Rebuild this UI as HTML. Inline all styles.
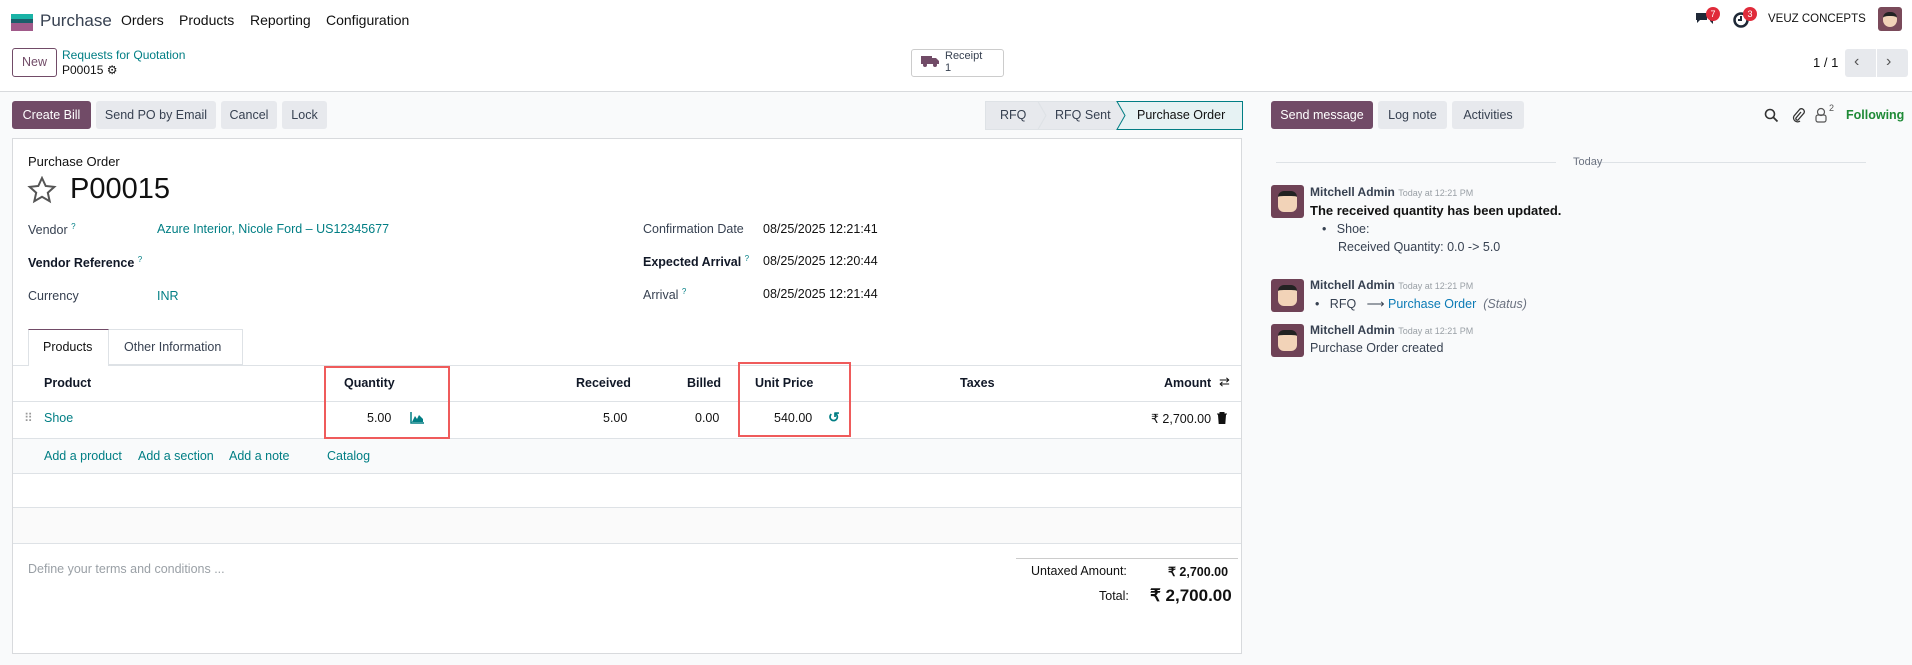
<!DOCTYPE html>
<html><head><meta charset="utf-8"><style>
*{box-sizing:border-box;margin:0;padding:0}
body{width:1912px;height:665px;overflow:hidden;background:#f9fafb;font-family:"Liberation Sans",sans-serif;font-size:12.5px;color:#374151;position:relative}
.a{position:absolute;white-space:nowrap}
.teal{color:#017e84}
.btn{position:absolute;height:28px;line-height:28px;text-align:center;border-radius:3px;background:#e7e9ed;color:#374151;font-size:12.5px}
.pri{background:#714b67;color:#fff}
.hdr{font-weight:bold;color:#111827}
.line{position:absolute;height:1px;background:#dee2e6}
</style></head><body>
<div class="a" style="left:0;top:0;width:1912px;height:92px;background:#fff;border-bottom:1px solid #d8dadd"></div>
<div class="a" style="left:11px;top:14px;width:22px;height:5px;background:#1ab3a6"></div>
<div class="a" style="left:11px;top:19px;width:22px;height:4px;background:#1c5f6b"></div>
<div class="a" style="left:11px;top:23px;width:22px;height:8px;background:#a15a8a"></div>
<div class="a" style="left:40px;top:11px;font-size:17px;color:#374151">Purchase</div>
<div class="a" style="left:121px;top:12px;font-size:14px;color:#111">Orders</div>
<div class="a" style="left:179px;top:12px;font-size:14px;color:#111">Products</div>
<div class="a" style="left:250px;top:12px;font-size:14px;color:#111">Reporting</div>
<div class="a" style="left:326px;top:12px;font-size:14px;color:#111">Configuration</div>
<svg class="a" style="left:1694px;top:10px" width="22" height="20" viewBox="0 0 22 20"><path d="M2 3h11v7H6l-3 3v-3H2z" fill="#1f2937"/><path d="M8 11h8l3 3v-3h1V6h-4v5" fill="#1f2937"/></svg>
<div class="a" style="left:1706px;top:7px;width:14px;height:14px;border-radius:7px;background:#e02b3a;color:#fff;font-size:9px;text-align:center;line-height:14px">7</div>
<svg class="a" style="left:1732px;top:11px" width="18" height="18"><circle cx="9" cy="9" r="6.5" fill="none" stroke="#1f2937" stroke-width="2.5"/><path d="M9 5v4h-3" stroke="#1f2937" stroke-width="2" fill="none"/></svg>
<div class="a" style="left:1743px;top:7px;width:14px;height:14px;border-radius:7px;background:#e02b3a;color:#fff;font-size:9px;text-align:center;line-height:14px">3</div>
<div class="a" style="left:1768px;top:13px;font-size:11.5px;color:#111">VEUZ CONCEPTS</div>
<div class="a" style="left:1878px;top:7px;width:24px;height:24px;border-radius:3px;background:#7a4a5a"><div style="margin:5px 5px;width:14px;height:15px;background:#f2d3b8;border-radius:6px 6px 7px 7px;border-top:4px solid #222"></div></div>
<div class="a" style="left:12px;top:48px;width:45px;height:29px;border:1px solid #714b67;border-radius:3px;color:#714b67;text-align:center;line-height:27px">New</div>
<div class="a teal" style="left:62px;top:48px;font-size:12px">Requests for Quotation</div>
<div class="a" style="left:62px;top:63px;font-size:12px;color:#111">P00015 <span style="font-size:12px">⚙</span></div>
<div class="a" style="left:911px;top:49px;width:93px;height:28px;border:1px solid #ccc;border-radius:3px;background:#fff"></div>
<svg class="a" style="left:921px;top:55px" width="18" height="13"><rect x="0" y="1" width="11" height="8" fill="#714b67"/><path d="M11 3h4l3 3v3h-7z" fill="#714b67"/><circle cx="4" cy="10" r="2" fill="#714b67"/><circle cx="14" cy="10" r="2" fill="#714b67"/></svg>
<div class="a" style="left:945px;top:50px;font-size:11px;line-height:12px;color:#374151">Receipt<br>1</div>
<div class="a" style="left:1813px;top:55px;font-size:13px;color:#111">1 / 1</div>
<div class="a" style="left:1845px;top:49px;width:63px;height:28px;background:#e7e9ed;border-radius:3px"></div>
<div class="a" style="left:1876px;top:49px;width:1px;height:28px;background:#fff"></div>
<div class="a" style="left:1854px;top:53px;font-size:16px;color:#555">‹</div>
<div class="a" style="left:1886px;top:53px;font-size:16px;color:#555">›</div>
<div class="btn pri" style="left:12px;top:101px;width:79px">Create Bill</div>
<div class="btn" style="left:96px;top:101px;width:120px">Send PO by Email</div>
<div class="btn" style="left:221px;top:101px;width:56px">Cancel</div>
<div class="btn" style="left:282px;top:101px;width:45px">Lock</div>
<svg class="a" style="left:985px;top:101px" width="258" height="29">
<path d="M0.5 0.5H53l8 14-8 14H0.5z" fill="#e7e9ed" stroke="#dee2e6"/>
<path d="M53 0.5h79l8 14-8 14H53l8-14z" fill="#e7e9ed" stroke="#dee2e6"/>
<path d="M132 0.5h125.5v28H132l8-14z" fill="#e6f2f3" stroke="#017e84"/>
</svg>
<div class="a" style="left:1000px;top:108px">RFQ</div>
<div class="a" style="left:1055px;top:108px">RFQ Sent</div>
<div class="a" style="left:1137px;top:108px;color:#111">Purchase Order</div>
<div class="a" style="left:12px;top:138px;width:1230px;height:516px;background:#fff;border:1px solid #d8dadd"></div>
<div class="a" style="left:28px;top:154px;font-size:13px;color:#111">Purchase Order</div>
<svg class="a" style="left:27px;top:176px" width="30" height="28"><path d="M15 2l3.7 8 8.6.9-6.5 5.8 1.9 8.5L15 20.8l-7.7 4.4 1.9-8.5L2.7 10.9l8.6-.9z" fill="none" stroke="#555" stroke-width="2"/></svg>
<div class="a" style="left:70px;top:173px;font-size:29px;color:#111">P00015</div>
<div class="a" style="left:28px;top:222px">Vendor <sup class="teal" style="font-size:8px">?</sup></div>
<div class="a teal" style="left:157px;top:222px">Azure Interior, Nicole Ford – US12345677</div>
<div class="a hdr" style="left:28px;top:255px">Vendor Reference <sup class="teal" style="font-size:8px;font-weight:normal">?</sup></div>
<div class="a" style="left:28px;top:289px">Currency</div>
<div class="a teal" style="left:157px;top:289px">INR</div>
<div class="a" style="left:643px;top:222px">Confirmation Date</div>
<div class="a" style="left:763px;top:222px;color:#111">08/25/2025 12:21:41</div>
<div class="a hdr" style="left:643px;top:254px">Expected Arrival <sup class="teal" style="font-size:8px;font-weight:normal">?</sup></div>
<div class="a" style="left:763px;top:254px;color:#111">08/25/2025 12:20:44</div>
<div class="a" style="left:643px;top:287px">Arrival <sup class="teal" style="font-size:8px">?</sup></div>
<div class="a" style="left:763px;top:287px;color:#111">08/25/2025 12:21:44</div>
<div class="a" style="left:28px;top:329px;width:81px;height:37px;background:#fff;border:1px solid #dee2e6;border-top:1px solid #714b67;border-bottom:none;z-index:2"></div>
<div class="a" style="left:43px;top:340px;color:#111;z-index:3">Products</div>
<div class="a" style="left:109px;top:329px;width:134px;height:36px;border:1px solid #dee2e6;border-left:none"></div>
<div class="a" style="left:124px;top:340px">Other Information</div>
<div class="line" style="left:13px;top:365px;width:1228px"></div>
<div class="a hdr" style="left:44px;top:376px">Product</div>
<div class="a hdr" style="left:344px;top:376px">Quantity</div>
<div class="a hdr" style="left:576px;top:376px">Received</div>
<div class="a hdr" style="left:687px;top:376px">Billed</div>
<div class="a hdr" style="left:755px;top:376px">Unit Price</div>
<div class="a hdr" style="left:960px;top:376px">Taxes</div>
<div class="a hdr" style="left:1164px;top:376px">Amount</div>
<div class="a" style="left:1219px;top:374px;font-size:13px;color:#111">⇄</div>
<div class="line" style="left:13px;top:401px;width:1228px"></div>
<div class="a" style="left:24px;top:411px;font-size:12px;color:#999;letter-spacing:-2px">⠿</div>
<div class="a teal" style="left:44px;top:411px">Shoe</div>
<div class="a" style="left:367px;top:411px;color:#111">5.00</div>
<svg class="a" style="left:410px;top:412px" width="14" height="12"><path d="M1 0v11h13" stroke="#017e84" fill="none" stroke-width="1.5"/><path d="M2 10l3-6 2 3 2-4 4 4v3z" fill="#017e84"/></svg>
<div class="a" style="left:603px;top:411px;color:#111">5.00</div>
<div class="a" style="left:695px;top:411px;color:#111">0.00</div>
<div class="a" style="left:774px;top:411px;color:#111">540.00</div>
<div class="a teal" style="left:828px;top:409px;font-size:14px;font-weight:bold">↺</div>
<div class="a" style="left:1151px;top:411px;color:#111">₹ 2,700.00</div>
<svg class="a" style="left:1217px;top:412px" width="10" height="12"><path d="M0 2h10M3 2V0h4v2M1.5 3h7l-.7 9H2.2z" fill="#111" stroke="#111" stroke-width="1"/></svg>
<div class="a" style="left:13px;top:439px;width:1228px;height:34px;background:#f9fafb"></div>
<div class="line" style="left:13px;top:438px;width:1228px"></div>
<div class="a teal" style="left:44px;top:449px">Add a product</div>
<div class="a teal" style="left:138px;top:449px">Add a section</div>
<div class="a teal" style="left:229px;top:449px">Add a note</div>
<div class="a teal" style="left:327px;top:449px">Catalog</div>
<div class="line" style="left:13px;top:473px;width:1228px"></div>
<div class="line" style="left:13px;top:507px;width:1228px"></div>
<div class="a" style="left:13px;top:508px;width:1228px;height:35px;background:#fafafa"></div>
<div class="line" style="left:13px;top:543px;width:1228px"></div>
<div class="a" style="left:324px;top:366px;width:126px;height:73px;border:2px solid #ef5b5b"></div>
<div class="a" style="left:738px;top:362px;width:113px;height:75px;border:2px solid #ef5b5b"></div>
<div class="a" style="left:28px;top:562px;color:#9aa0a6">Define your terms and conditions ...</div>
<div class="line" style="left:1016px;top:558px;width:222px;background:#ccc"></div>
<div class="a" style="left:1031px;top:564px;color:#111">Untaxed Amount:</div>
<div class="a" style="left:1168px;top:564px;color:#111;font-weight:bold">₹ 2,700.00</div>
<div class="a" style="left:1099px;top:589px;color:#111">Total:</div>
<div class="a" style="left:1150px;top:586px;color:#111;font-weight:bold;font-size:17px">₹ 2,700.00</div>
<div class="btn pri" style="left:1271px;top:101px;width:102px">Send message</div>
<div class="btn" style="left:1378px;top:101px;width:69px">Log note</div>
<div class="btn" style="left:1452px;top:101px;width:72px">Activities</div>
<svg class="a" style="left:1764px;top:108px" width="15" height="15"><circle cx="6" cy="6" r="4.5" stroke="#333" stroke-width="1.6" fill="none"/><path d="M9.5 9.5l4 4" stroke="#333" stroke-width="1.8"/></svg>
<svg class="a" style="left:1791px;top:107px" width="14" height="16"><path d="M10 5l-5 6a1.5 1.5 0 0 0 2 2l6-7a3 3 0 0 0-4-4L3 9a4 4 0 0 0 6 5" stroke="#333" stroke-width="1.3" fill="none"/></svg>
<svg class="a" style="left:1815px;top:107px" width="12" height="16"><circle cx="6" cy="5" r="3.5" stroke="#555" stroke-width="1.2" fill="none"/><rect x="1" y="8" width="10" height="7" rx="2" stroke="#555" stroke-width="1.2" fill="none"/></svg>
<div class="a" style="left:1829px;top:103px;font-size:9px;color:#555">2</div>
<div class="a" style="left:1846px;top:108px;color:#1e8a36;font-weight:bold">Following</div>
<div class="line" style="left:1276px;top:162px;width:280px"></div>
<div class="line" style="left:1596px;top:162px;width:270px"></div>
<div class="a" style="left:1573px;top:156px;font-size:11px;color:#6b7280">Today</div>
<div class="a" style="left:1271px;top:185px;width:33px;height:33px;border-radius:3px;background:#6f4256"><div style="margin:6px 7px;width:19px;height:21px;background:#f2d3b8;border-top:5px solid #222;border-radius:6px"></div></div>
<div class="a" style="left:1310px;top:185px;font-size:12px;font-weight:bold;color:#374151">Mitchell Admin <span style="font-size:9px;font-weight:normal;color:#9aa0a6">Today at 12:21 PM</span></div>
<div class="a" style="left:1310px;top:203px;font-weight:bold;color:#111;font-size:13px">The received quantity has been updated.</div>
<div class="a" style="left:1322px;top:222px;color:#374151">•&nbsp;&nbsp; Shoe:</div>
<div class="a" style="left:1338px;top:240px;color:#374151">Received Quantity: 0.0 -&gt; 5.0</div>
<div class="a" style="left:1271px;top:279px;width:33px;height:33px;border-radius:3px;background:#6f4256"><div style="margin:6px 7px;width:19px;height:21px;background:#f2d3b8;border-top:5px solid #222;border-radius:6px"></div></div>
<div class="a" style="left:1310px;top:278px;font-size:12px;font-weight:bold">Mitchell Admin <span style="font-size:9px;font-weight:normal;color:#9aa0a6">Today at 12:21 PM</span></div>
<div class="a" style="left:1315px;top:296px">•&nbsp;&nbsp; RFQ &nbsp; ⟶ <span style="color:#0a7ab5">Purchase Order</span> &nbsp;<i style="color:#6b7280">(Status)</i></div>
<div class="a" style="left:1271px;top:324px;width:33px;height:33px;border-radius:3px;background:#6f4256"><div style="margin:6px 7px;width:19px;height:21px;background:#f2d3b8;border-top:5px solid #222;border-radius:6px"></div></div>
<div class="a" style="left:1310px;top:323px;font-size:12px;font-weight:bold">Mitchell Admin <span style="font-size:9px;font-weight:normal;color:#9aa0a6">Today at 12:21 PM</span></div>
<div class="a" style="left:1310px;top:341px">Purchase Order created</div>
</body></html>
